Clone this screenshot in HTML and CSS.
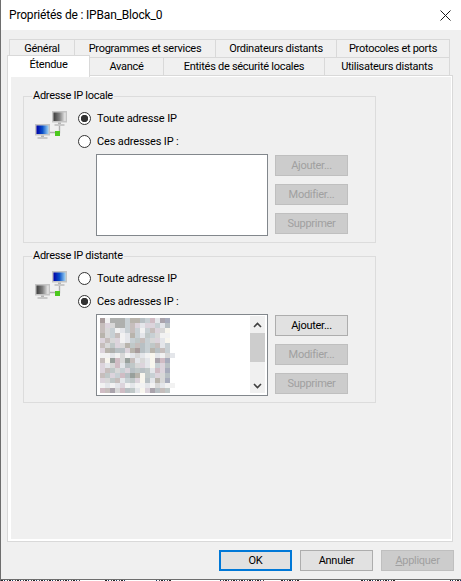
FILE: index.html
```html
<!DOCTYPE html>
<html lang="fr">
<head>
    <meta charset="UTF-8">
    <meta name="viewport" content="width=device-width, initial-scale=1.0">
    <title>Propriétés de : IPBan_Block_0</title>
    <link rel="stylesheet" href="styles.css">
</head>
<body>
    <svg class="defs" width="0" height="0">
        <defs>
            <linearGradient id="blue-screen" x1="0" y1="0" x2="1" y2="0">
                <stop offset="0" stop-color="#0000a8"/>
                <stop offset="0.5" stop-color="#0a50c8"/>
                <stop offset="1" stop-color="#a0d4f4"/>
            </linearGradient>
            <linearGradient id="grey-screen" x1="0" y1="0" x2="1" y2="0">
                <stop offset="0" stop-color="#3c3c3c"/>
                <stop offset="0.5" stop-color="#808080"/>
                <stop offset="1" stop-color="#f0f0f0"/>
            </linearGradient>
            <symbol id="monitor" viewBox="0 0 15 16">
                <rect x="0" y="0" width="15" height="11.5" fill="#c4c4c4"/>
                <rect x="6" y="11.5" width="3" height="2" fill="#b4b4b4"/>
                <rect x="2.5" y="13" width="10" height="2" fill="#c8c8c8"/>
            </symbol>
        </defs>
    </svg>

    <header class="titlebar">
        <span>Propriétés de : IPBan_Block_0</span>
        <svg class="close" width="11" height="11" viewBox="0 0 11 11">
            <path d="M0.5 0.5L10.5 10.5M10.5 0.5L0.5 10.5" stroke="#1a1a1a" stroke-width="1" fill="none"/>
        </svg>
    </header>

    <nav class="tabs">
        <div class="tab-row tab-row-back">
            <div class="tab w-general">Général</div>
            <div class="tab w-programs">Programmes et services</div>
            <div class="tab w-computers">Ordinateurs distants</div>
            <div class="tab w-protocols">Protocoles et ports</div>
        </div>
        <div class="tab-row tab-row-front">
            <div class="tab active w-scope">Étendue</div>
            <div class="tab w-advanced">Avancé</div>
            <div class="tab w-entities">Entités de sécurité locales</div>
            <div class="tab w-users">Utilisateurs distants</div>
        </div>
    </nav>

    <main class="panel">
        <div class="panel-inner">
            <fieldset class="group group-local">
                <legend>Adresse IP locale</legend>
                <div class="group-body">
                    <svg class="network" width="33" height="29" viewBox="0 0 33 29">
                        <use href="#monitor" x="17" y="0" width="15" height="16"/>
                        <rect x="18.5" y="1.5" width="12" height="8.5" fill="url(#grey-screen)"/>
                        <path d="M24.5 15V21.5H15" stroke="#b0b0b0" stroke-width="1.4" fill="none"/>
                        <use href="#monitor" x="0" y="13" width="15" height="16"/>
                        <rect x="1.5" y="14.5" width="12" height="8.5" fill="url(#blue-screen)"/>
                        <rect x="20" y="20" width="5" height="5" fill="#4cc81e"/>
                    </svg>
                    <div class="choices">
                        <label class="choice"><input type="radio" name="local" checked>Toute adresse IP</label>
                        <label class="choice"><input type="radio" name="local">Ces adresses IP :</label>
                        <div class="list-row">
                            <div class="listbox"></div>
                            <div class="list-actions">
                                <button type="button" disabled>Ajouter...</button>
                                <button type="button" disabled>Modifier...</button>
                                <button type="button" disabled>Supprimer</button>
                            </div>
                        </div>
                    </div>
                </div>
            </fieldset>

            <fieldset class="group group-remote">
                <legend>Adresse IP distante</legend>
                <div class="group-body">
                    <svg class="network" width="33" height="29" viewBox="0 0 33 29">
                        <use href="#monitor" x="17" y="0" width="15" height="16"/>
                        <rect x="18.5" y="1.5" width="12" height="8.5" fill="url(#blue-screen)"/>
                        <path d="M24.5 15V21.5H15" stroke="#b0b0b0" stroke-width="1.4" fill="none"/>
                        <use href="#monitor" x="0" y="13" width="15" height="16"/>
                        <rect x="1.5" y="14.5" width="12" height="8.5" fill="url(#grey-screen)"/>
                        <rect x="20" y="20" width="5" height="5" fill="#4cc81e"/>
                    </svg>
                    <div class="choices">
                        <label class="choice"><input type="radio" name="remote">Toute adresse IP</label>
                        <label class="choice"><input type="radio" name="remote" checked>Ces adresses IP :</label>
                        <div class="list-row">
                            <div class="listbox filled">
                                <svg id="blurred-ips" class="blurred" width="75" height="75" viewBox="0 0 75 75"></svg>
                                <div class="scrollbar">
                                    <svg width="15" height="17" viewBox="0 0 15 17">
                                        <path d="M4 11L7.5 7.5L11 11" stroke="#404040" stroke-width="1.6" fill="none"/>
                                    </svg>
                                    <div class="scroll-track"><div class="scroll-thumb"></div></div>
                                    <svg width="15" height="17" viewBox="0 0 15 17">
                                        <path d="M4 8L7.5 11.5L11 8" stroke="#404040" stroke-width="1.6" fill="none"/>
                                    </svg>
                                </div>
                            </div>
                            <div class="list-actions">
                                <button type="button">Ajouter...</button>
                                <button type="button" disabled>Modifier...</button>
                                <button type="button" disabled>Supprimer</button>
                            </div>
                        </div>
                    </div>
                </div>
            </fieldset>
        </div>
    </main>

    <footer class="dialog-buttons">
        <button type="button" class="default">OK</button>
        <button type="button">Annuler</button>
        <button type="button" disabled><u>A</u>ppliquer</button>
    </footer>

    <div class="behind"></div>

    <script src="mosaic.js"></script>
</body>
</html>
```

FILE: styles.css
```css
* {
    box-sizing: border-box;
}

html, body {
    margin: 0;
    height: 100%;
}

body {
    display: flex;
    flex-direction: column;
    height: 581px;
    overflow: hidden;
    background: #f0f0f0;
    border-left: 1px solid #6e6e6e;
    font-family: Roboto, "Open Sans", sans-serif;
    font-size: 11px;
    letter-spacing: -0.28px;
    line-height: 16px;
    color: #000;
}

.defs {
    position: absolute;
}

.titlebar {
    display: flex;
    justify-content: space-between;
    align-items: center;
    height: 30px;
    padding: 0 10px 0 8px;
    background: #fff;
    font-size: 12px;
    letter-spacing: -0.18px;
}

.tabs {
    margin-top: 9px;
}

.tab-row {
    display: flex;
    height: 18px;
}

.tab-row-back {
    margin-left: 8px;
}

.tab-row-front {
    margin-left: 6px;
}

.tab {
    display: flex;
    justify-content: center;
    align-items: center;
    height: 19px;
    margin-right: -1px;
    border: 1px solid #d9d9d9;
    background: #f0f0f0;
}

.tab.active {
    position: relative;
    z-index: 1;
    height: 22px;
    margin-top: -2px;
    padding-bottom: 3px;
    background: #fff;
    border-bottom: none;
}

.w-general { width: 66px; }
.w-programs { width: 142px; }
.w-computers { width: 122px; }
.w-protocols { width: 114px; }
.w-scope { width: 83px; }
.w-advanced { width: 75px; }
.w-entities { width: 162px; }
.w-users { width: 126px; }

.panel {
    width: 446px;
    height: 467px;
    margin-left: 6px;
    border: 1px solid #d9d9d9;
    background: #fff;
    padding: 1px 1px 2px 3px;
}

.panel-inner {
    height: 100%;
    padding: 11px 0 0 12px;
    background: #f0f0f0;
}

.group {
    width: 353px;
    margin: 0;
    padding: 0;
    border: 1px solid #dcdcdc;
}

.group legend {
    margin-left: 8px;
    padding: 0 1px;
}

.group-remote {
    margin-top: 5px;
}

.group-body {
    display: flex;
    padding: 3px 0 6px 11px;
}

.network {
    flex: none;
    margin: 4px 10px 0 0;
}

.choice {
    display: flex;
    align-items: center;
    height: 23px;
    letter-spacing: -0.14px;
}

.choice input {
    appearance: none;
    width: 13px;
    height: 13px;
    margin: 0 6px 0 0;
    border: 1px solid #333;
    border-radius: 50%;
    background: #fff;
}

.choice input:checked {
    background: radial-gradient(circle, #333 3.4px, #fff 4px);
}

.list-row {
    display: flex;
    gap: 7px;
    margin: 1px 0 0 18px;
}

.listbox {
    display: flex;
    justify-content: space-between;
    width: 172px;
    height: 82px;
    border: 1px solid #82878c;
    background: #fff;
}

.blurred {
    margin: 3px 0 0 3px;
}

.scrollbar {
    display: flex;
    flex-direction: column;
    width: 15px;
    margin: 1px 2px 2px 0;
    background: #f0f0f0;
}

.scrollbar svg {
    flex: none;
    display: block;
}

.scroll-track {
    flex: 1;
}

.scroll-thumb {
    height: 29px;
    background: #cdcdcd;
}

.list-actions {
    display: flex;
    flex-direction: column;
    gap: 8px;
    padding-top: 1px;
}

button {
    width: 73px;
    height: 21px;
    padding: 0;
    border: 1px solid #adadad;
    background: #e1e1e1;
    font: inherit;
    letter-spacing: inherit;
    color: #000;
}

button:disabled {
    border-color: #bfbfbf;
    background: #ccc;
    color: #a0a0a0;
}

button.default {
    border: 2px solid #0078d7;
}

.dialog-buttons {
    display: flex;
    justify-content: flex-end;
    gap: 8px;
    margin-top: 8px;
    padding-right: 7px;
}

/* edge of the window and bits of text of what lies behind it */
.behind {
    height: 2px;
    margin-top: auto;
    border-top: 1px solid #6e6e6e;
    background:
        linear-gradient(90deg,
            transparent 0 79px, #fff 79px 103px,
            transparent 103px 124px, #fff 124px 154px,
            transparent 154px 171px, #fff 171px 219px,
            transparent 219px 264px, #fff 264px 279px,
            transparent 279px 299px, #fff 299px 359px,
            transparent 359px 394px, #fff 394px 449px,
            transparent 449px),
        repeating-linear-gradient(90deg, #222 0 2px, #fff 2px 3px, #1a3a66 3px 4px, #fff 4px 6px, #444 6px 7px, #fff 7px 8px);
}
```

FILE: mosaic.js
```js
// the address list is blurred in the screenshot, 5px squares
var palette = {
    A: '#a89c9c', B: '#aeb0ae', C: '#b8b4ac', D: '#c8d0d4',
    E: '#d0bcc4', F: '#aaa4ac', G: '#a8acbc', H: '#f2f2f2',
    I: '#d8d8d8', J: '#c6bebc', K: '#e4e6ea', L: '#f8f6ee',
    M: '#98a09c', N: '#c0c8c8', O: '#dcd4dc', P: '#b8c0c4'
};

var rows = [
    'AHBBBDCCPDEKFG',
    'JOIBBDJOKOODKP',
    'JIDHKDJDHDJOIL',
    'CIDJHKCDKNDIHH',
    'OJIOHKDNJDIOKL',
    'JINOICNJPDNJKD',
    'OCBPPOCAPDCPJD',
    'HHKHIHKIKHLKHIK',
    'JLMEIMJKIKLFEG',
    'OKIEKPNIOKLDOP',
    'OJNIDOPNPNKEOG',
    'JNODEPMCLNDOIP',
    'OINJKDNOLPKCIG',
    'HKHKOHKHHKHIKHH',
    'EJFIEPNKLOFPJN'
];

var svg = document.getElementById('blurred-ips');

rows.forEach(function (row, y) {
    row.split('').forEach(function (key, x) {
        var cell = document.createElementNS('http://www.w3.org/2000/svg', 'rect');
        cell.setAttribute('x', x * 5);
        cell.setAttribute('y', y * 5);
        cell.setAttribute('width', 5);
        cell.setAttribute('height', 5);
        cell.setAttribute('fill', palette[key]);
        svg.appendChild(cell);
    });
});
```
